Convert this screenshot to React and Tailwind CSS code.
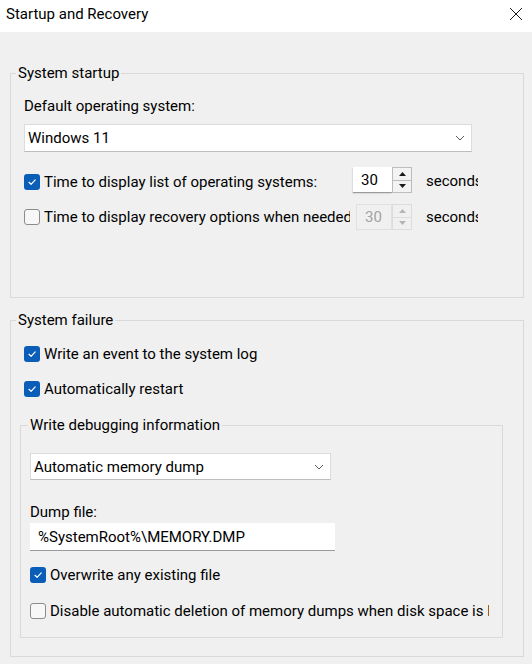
import React from 'react';

const font = { fontFamily: 'Roboto, "Noto Sans", sans-serif' };

function Checkbox({ checked }) {
  if (checked) {
    return (
      <span className="flex h-[16px] w-[16px] shrink-0 items-center justify-center rounded-[3px] bg-[#0a5eb8]">
        <svg width="12" height="12" viewBox="0 0 12 12" fill="none">
          <path d="M3 6.3 L5.1 8.3 L9.2 3.9" stroke="#ffffff" strokeWidth="1.2" strokeLinecap="round" strokeLinejoin="round" />
        </svg>
      </span>
    );
  }
  return <span className="h-[16px] w-[16px] shrink-0 rounded-[3px] border border-[#8c8c8c] bg-[#f7f7f7]" />;
}

function CheckRow({ checked, children, className = '' }) {
  return (
    <div className={`flex h-[20px] items-center ${className}`}>
      <Checkbox checked={checked} />
      <span className="ml-[4px] whitespace-nowrap">{children}</span>
    </div>
  );
}

function Chevron() {
  return (
    <svg width="10" height="6" viewBox="0 0 10 6" fill="none">
      <path d="M1 1 L5 5 L9 1" stroke="#5a5a5a" strokeWidth="1" />
    </svg>
  );
}

function Select({ value, className = '' }) {
  return (
    <div className={`flex items-center justify-between border border-[#dcdcdc] border-b-[#bdbdbd] bg-white pl-[3px] pr-[6px] ${className}`}>
      <span className="whitespace-nowrap">{value}</span>
      <Chevron />
    </div>
  );
}

function Arrow({ up, color }) {
  return (
    <svg width="7" height="4" viewBox="0 0 7 4">
      <path d={up ? 'M0 4 L3.5 0 L7 4 Z' : 'M0 0 L3.5 4 L7 0 Z'} fill={color} />
    </svg>
  );
}

function Spinner({ value, disabled, className = '' }) {
  const arrow = disabled ? '#b5b5b5' : '#1a1a1a';
  return (
    <div className={`flex h-[26px] ${className}`}>
      <div
        className={`flex flex-1 items-center pl-[8px] ${
          disabled ? 'border border-[#e0e0e0] bg-[#f0f0f0] text-[#a3a3a3]' : 'border-b border-[#9a9a9a] bg-white text-black shadow-[-1px_1px_1px_rgba(0,0,0,0.08)]'
        }`}
      >
        {value}
      </div>
      <div className={`flex w-[20px] flex-col border ${disabled ? 'border-[#dcdcdc] bg-[#f0f0f0]' : 'border-[#bcbcbc] bg-[#f3f3f3]'}`}>
        <div className={`flex flex-1 items-center justify-center border-b ${disabled ? 'border-[#dcdcdc]' : 'border-[#bcbcbc]'}`}>
          <Arrow up color={arrow} />
        </div>
        <div className="flex flex-1 items-center justify-center">
          <Arrow color={arrow} />
        </div>
      </div>
    </div>
  );
}

function Group({ label, className = '', legendClass = '', children }) {
  return (
    <fieldset className={`border border-[#d9d9d9] ${className}`}>
      <legend className={`px-[2px] leading-[20px] ${legendClass}`}>{label}</legend>
      {children}
    </fieldset>
  );
}

export default function App() {
  return (
    <div className="h-[664px] w-[532px] overflow-hidden bg-[#f0f0f0] text-[15px] leading-[20px] text-black" style={font}>
      {/* title bar */}
      <div className="flex h-[32px] items-center justify-between bg-white pb-[4px] pl-[6px] pr-[9px]">
        <span>Startup and Recovery</span>
        <svg width="14" height="14" viewBox="0 0 14 14" fill="none">
          <path d="M1 1 L13 13 M13 1 L1 13" stroke="#1a1a1a" strokeWidth="1" />
        </svg>
      </div>

      <div className="pl-[10px] pr-[8px] pt-[31px]">
        <Group label="System startup" className="px-[13px] pt-[13px] pb-[67px]" legendClass="ml-[-8px]">
          <div>Default operating system:</div>
          <Select value="Windows 11" className="mt-[8px] h-[28px] w-[448px]" />

          <div className="mt-[15px] flex h-[26px] items-center">
            <div className="flex w-[329px] items-center pt-[3px]">
              <Checkbox checked />
              <span className="ml-[4px] whitespace-nowrap">Time to display list of operating systems:</span>
            </div>
            <Spinner value="30" className="w-[59px]" />
            <span className="ml-[14px] w-[52px] overflow-hidden whitespace-nowrap pt-[2px]">seconds</span>
          </div>

          <div className="mt-[11px] flex h-[26px] items-center">
            <div className="flex w-[326px] items-center overflow-hidden">
              <Checkbox />
              <span className="ml-[4px] whitespace-nowrap">Time to display recovery options when needed</span>
            </div>
            <Spinner value="30" disabled className="ml-[6px] w-[56px]" />
            <span className="ml-[14px] w-[52px] overflow-hidden whitespace-nowrap">seconds</span>
          </div>
        </Group>

        <Group label="System failure" className="mt-[12px] px-[13px] pt-[14px] pb-[18px]" legendClass="ml-[-8px]">
          <CheckRow checked>Write an event to the system log</CheckRow>
          <CheckRow checked className="mt-[15px]">Automatically restart</CheckRow>

          <Group
            label="Write debugging information"
            className="ml-[-4px] mr-[7px] mt-[16px] pl-[9px] pr-[10px] pt-[18px] pb-[16px]"
            legendClass="ml-[-2px]"
          >
            <Select value="Automatic memory dump" className="h-[27px] w-[301px]" />
            <div className="mt-[22px]">Dump file:</div>
            <div className="mt-[1px] flex h-[28px] w-[305px] items-center border-b border-[#9a9a9a] bg-white pl-[8px]">
              %SystemRoot%\MEMORY.DMP
            </div>
            <CheckRow checked className="mt-[14px]">Overwrite any existing file</CheckRow>
            <div className="mt-[16px] w-[459px] overflow-hidden">
              <CheckRow>Disable automatic deletion of memory dumps when disk space is low</CheckRow>
            </div>
          </Group>
        </Group>
      </div>
    </div>
  );
}
